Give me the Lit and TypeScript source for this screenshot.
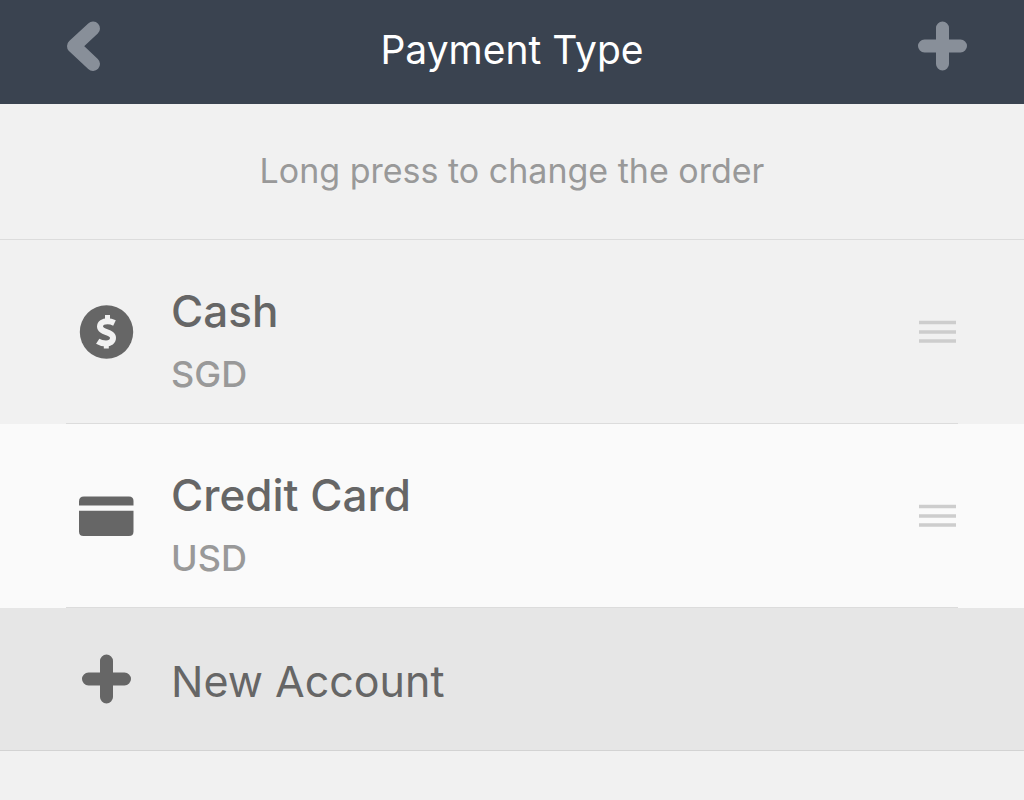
import { LitElement, html, css, svg } from "lit";
import { customElement } from "lit/decorators.js";

const accounts = [
  { name: "Cash", currency: "SGD", kind: "cash" },
  { name: "Credit Card", currency: "USD", kind: "card" },
];

const icons: Record<string, unknown> = {
  cash: svg`<circle cx="28.500" cy="28" r="26.700" fill="currentColor"/><path d="M36.500 19C34 17.800 32 17.300 29.500 17.300C25 17.300 22 19.500 22 22.600C22 28.800 35 27.400 35 33.800C35 37.500 32 39.500 28 39.500C25 39.500 22 38.800 19.700 37.300" fill="none" stroke="#f1f1f1" stroke-width="6"/><path d="M29.500 11V18M28.300 39V44.500" stroke="#f1f1f1" stroke-width="5"/>`,
  card: svg`<path d="M1 17.500V13.500Q1 8.500 6 8.500H51Q55.500 8.500 55.500 13V17.500ZM1 22.700H55.500V43.500Q55.500 48 51 48H5.500Q1 48 1 43.500Z" fill="currentColor"/>`,
};

@customElement("app-root")
export class AppRoot extends LitElement {
  static styles = css`
    :host { display: block; min-height: 100vh; background: #f1f1f1; color: #666; font-family: Inter, "Liberation Sans", sans-serif; }
    * { box-sizing: border-box; }
    button { border: 0; padding: 0; background: none; color: inherit; font: inherit; cursor: pointer; }
    svg { display: block; }
    header { display: grid; grid-template-columns: 56px 1fr 56px; align-items: center; height: 104px; padding: 0 54px 4px; background: #3a4350; color: #888f99; }
    header button { height: 56px; margin-bottom: 8px; }
    h1 { margin: 0; color: #fff; font-size: 39px; line-height: 48px; font-weight: 400; text-align: center; }
    .hint { margin: 0; padding: 43px 0 44px; border-bottom: 1px solid #dcdcdc; color: #999; font-size: 34px; line-height: 48px; font-weight: 400; text-align: center; }
    ul { list-style: none; margin: 0; padding: 0; }
    .account { padding: 0 66px; }
    .account:nth-child(even) { background: #fafafa; }
    .row { display: flex; align-items: center; height: 184px; padding-left: 12px; border-bottom: 1px solid #dcdcdc; }
    .text { flex: 1; margin-left: 37px; padding-top: 18px; }
    .name { font-size: 44px; line-height: 56px; font-weight: 500; }
    .currency { margin-top: 11px; font-size: 36px; line-height: 48px; font-weight: 500; color: #999; }
    .handle { color: #cdcdcd; }
    .new { display: flex; align-items: center; width: 100%; height: 143px; padding: 0 78px; border-bottom: 1px solid #d3d3d3; background: #e6e6e6; text-align: left; }
    .new span { margin-left: 37px; padding-top: 3px; font-size: 43px; line-height: 56px; font-weight: 400; }
  `;

  plus() {
    return html`<svg width="56" height="56" viewBox="0 0 56 56" aria-hidden="true"><path d="M28.500 10V46M10.500 28H46.500" stroke="currentColor" stroke-width="13" stroke-linecap="round"/></svg>`;
  }

  render() {
    return html`
      <header>
        <button aria-label="Back"><svg width="56" height="56" viewBox="0 0 56 56" aria-hidden="true"><path d="M39 10.500L20 28.200L39 46" fill="none" stroke="currentColor" stroke-width="14" stroke-linecap="round" stroke-linejoin="round"/></svg></button>
        <h1>Payment Type</h1>
        <button aria-label="Add payment type">${this.plus()}</button>
      </header>
      <p class="hint">Long press to change the order</p>
      <ul>${accounts.map((a) => html`
        <li class="account"><div class="row">
          <svg width="56" height="56" viewBox="0 0 56 56" aria-hidden="true">${icons[a.kind]}</svg>
          <div class="text"><div class="name">${a.name}</div><div class="currency">${a.currency}</div></div>
          <button class="handle" aria-label="Reorder ${a.name}"><svg width="40" height="24" viewBox="0 0 40 24" aria-hidden="true"><path d="M1 2.500H38M1 12H38M1 21H38" stroke="currentColor" stroke-width="3.500"/></svg></button>
        </div></li>`)}</ul>
      <button class="new">${this.plus()}<span>New Account</span></button>
    `;
  }
}
